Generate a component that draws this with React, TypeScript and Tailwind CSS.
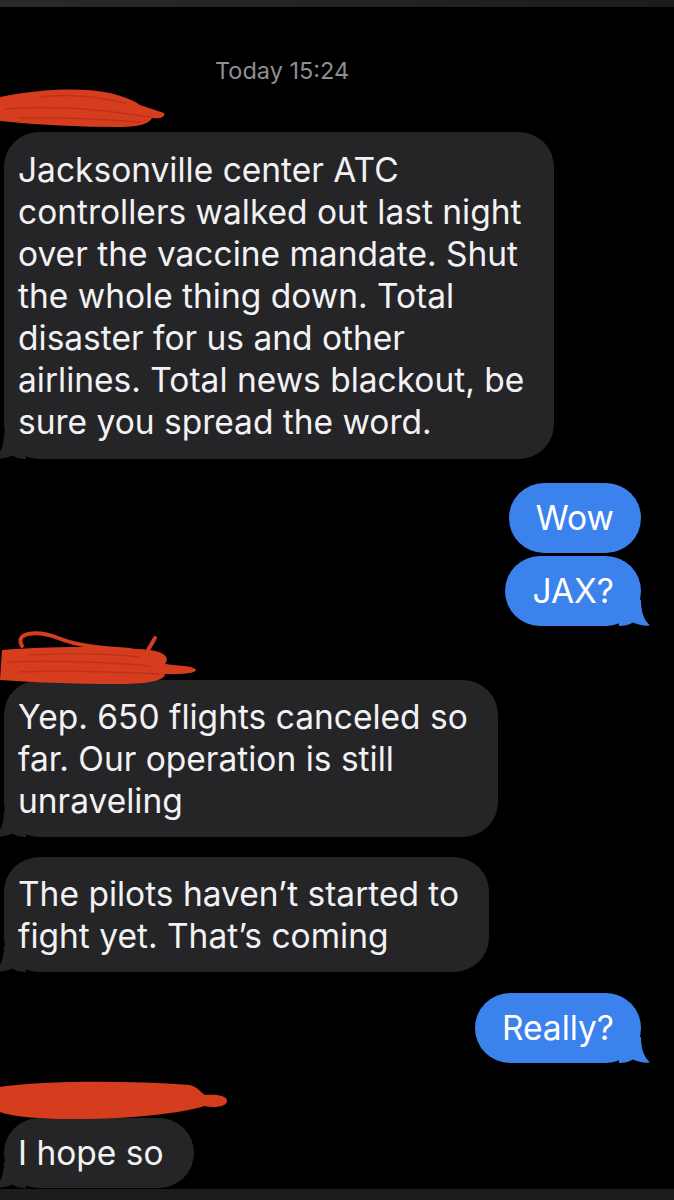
import React from 'react';

type BubbleProps = {
  lines: string[];
  out?: boolean;
  tail?: boolean;
  className?: string;
};

const Tail: React.FC<{ out?: boolean }> = ({ out }) => (
  <svg
    width="32"
    height="26"
    viewBox="0 0 32 26"
    className={
      out
        ? 'absolute bottom-0 right-[-10px] fill-[#3b82ec]'
        : 'absolute bottom-0 left-[-10px] -scale-x-100 fill-[#252528]'
    }
  >
    <path d="M22 0 C22 12 25 20 31 25.5 C25 26 19 25 14 22.5 C10 25 5 26 0 26 L0 0 Z" />
  </svg>
);

const Bubble: React.FC<BubbleProps> = ({ lines, out, tail, className = '' }) => (
  <div
    className={`relative w-fit rounded-[35px] text-[33.5px] leading-[42px] ${
      out
        ? 'self-end mr-[33px] px-[27px] bg-[#3b82ec] text-white'
        : 'ml-[4px] pl-[14px] pr-[30px] bg-[#252528] text-[#f2f2f4]'
    } ${className}`}
  >
    {lines.map((l) => (
      <div key={l} className="relative z-10 whitespace-nowrap">
        {l}
      </div>
    ))}
    {tail && <Tail out={out} />}
  </div>
);

// red marker scribbles hiding the sender names
const Scribble1 = () => (
  <svg width="170" height="44" viewBox="0 0 170 44" className="absolute left-0 top-[2px]">
    <path
      d="M0 10 C40 2 80 0 110 6 C125 10 135 14 140 18 L164 26 C166 30 160 32 152 31 C150 36 140 40 120 40 C80 40 40 38 0 34 Z"
      fill="#d63d1f"
    />
    <g stroke="#a92a15" strokeWidth="1.5" fill="none" opacity="0.55" strokeLinecap="round">
      <path d="M6 22 C50 18 100 22 150 30" />
      <path d="M20 31 C60 30 100 32 140 35" />
      <path d="M40 10 C70 6 100 10 125 16" />
    </g>
  </svg>
);

const Scribble2 = () => (
  <svg width="200" height="60" viewBox="0 0 200 60" className="absolute left-0 top-[2px] z-20">
    <path
      d="M2 22 C50 18 110 18 150 22 C165 24 170 30 165 36 C180 38 195 38 196 42 C195 46 180 46 165 46 C165 52 150 56 120 56 C70 56 30 54 0 52 Z"
      fill="#d63d1f"
    />
    <g stroke="#d63d1f" strokeLinecap="round" strokeLinejoin="round" fill="none" strokeWidth="4">
      <path d="M22 18 C14 4 38 2 58 10 C78 18 100 20 130 22" />
      <path d="M148 22 L155 10" />
    </g>
    <g stroke="#a92a15" strokeWidth="1.5" fill="none" opacity="0.55" strokeLinecap="round">
      <path d="M8 34 C50 32 110 34 150 38" />
      <path d="M20 44 C70 42 120 44 160 46" />
      <path d="M30 27 C70 25 110 26 140 29" />
    </g>
  </svg>
);

const Scribble3 = () => (
  <svg width="232" height="42" viewBox="0 0 232 42" className="absolute left-0 top-[18px] z-20">
    <path
      d="M0 6 C40 0 120 -1 190 4 C198 6 200 11 205 14 C214 13 226 14 227 19 C228 26 214 27 204 25 C190 30 140 39 60 38 C30 37 12 35 0 31 Z"
      fill="#d63d1f"
    />
  </svg>
);

export default function App() {
  return (
    <div className="w-[674px] h-[1200px] bg-black overflow-hidden flex flex-col font-['Inter',sans-serif]">
      <div className="h-[7px] bg-gradient-to-r from-[#2a2a2a] to-[#1c1c1e] shrink-0" />

      <div className="mt-[50px] h-[28px] pl-[215px] text-[23.5px] leading-[28px] text-[#8e8e93] shrink-0">
        Today 15:24
      </div>

      <div className="relative h-[47px] shrink-0">
        <Scribble1 />
      </div>

      <Bubble
        tail
        className="pt-[17px] pb-[16px]"
        lines={[
          'Jacksonville center ATC',
          'controllers walked out last night',
          'over the vaccine mandate. Shut',
          'the whole thing down. Total',
          'disaster for us and other',
          'airlines. Total news blackout, be',
          'sure you spread the word.',
        ]}
      />

      <Bubble out className="mt-[24px] py-[14px]" lines={['Wow']} />
      <Bubble out tail className="mt-[3px] py-[14px]" lines={['JAX?']} />

      <div className="relative h-[54px] shrink-0">
        <Scribble2 />
      </div>

      <Bubble
        tail
        className="pt-[16px] pb-[15px]"
        lines={['Yep. 650 flights canceled so', 'far. Our operation is still', 'unraveling']}
      />

      <Bubble
        tail
        className="mt-[20px] pt-[16px] pb-[15px]"
        lines={['The pilots haven\u2019t started to', 'fight yet. That\u2019s coming']}
      />

      <Bubble out tail className="mt-[21px] py-[14px]" lines={['Really?']} />

      <div className="relative h-[55px] shrink-0">
        <Scribble3 />
      </div>

      <Bubble tail className="py-[14px]" lines={['I hope so']} />

      <div className="mt-[1px] flex-1 bg-[#1c1c1e]" />
    </div>
  );
}
